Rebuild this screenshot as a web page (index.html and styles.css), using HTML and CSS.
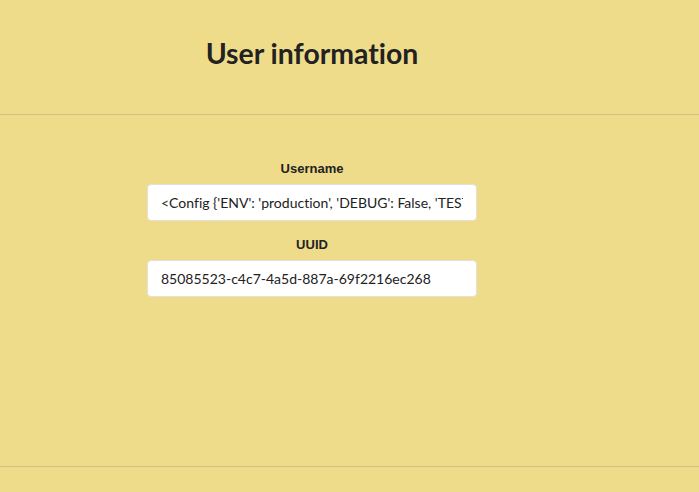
FILE: index.html
```html
<!DOCTYPE html>
<html>
<head>
<meta charset="utf-8">
<link rel="stylesheet" href="styles.css">
</head>
<body>
<header class="top">
  <div class="col"><h1 class="title">User information</h1></div>
</header>
<main class="main">
  <div class="col">
    <form class="form">
      <label class="label">Username</label>
      <input class="field" type="text" value="<Config {'ENV': 'production', 'DEBUG': False, 'TESTING': False}>" readonly>
      <label class="label">UUID</label>
      <input class="field" type="text" value="85085523-c4c7-4a5d-887a-69f2216ec268" readonly>
    </form>
  </div>
</main>
<footer class="bottom"></footer>
</body>
</html>
```

FILE: styles.css
```css
html, body { margin: 0; padding: 0; }
body {
  background: #efdc8a;
  font-family: Lato, "Liberation Sans", sans-serif;
  color: #222;
  width: 699px;
  height: 492px;
  overflow: hidden;
  font-variant-ligatures: none;
}
.col { width: 624px; display: flex; flex-direction: column; align-items: center; }
.top { height: 114px; border-bottom: 1px solid #d3c27f; display: flex; }
.title { margin: 36px 0 0; font-size: 28.4px; font-weight: 700; line-height: 34px; color: #222; font-feature-settings: "liga" 0; }
.main { height: 351px; border-bottom: 1px solid #d3c27f; }
.form { display: flex; flex-direction: column; align-items: center; padding-top: 46px; }
.label {
  font-family: "Liberation Sans", Arial, sans-serif;
  font-weight: 700;
  font-size: 13px;
  line-height: 16px;
  color: #222;
  margin-bottom: 7px;
}
.field {
  box-sizing: border-box;
  width: 330px;
  height: 37px;
  border: 1px solid #e2e0d8;
  border-radius: 4px;
  background: #fff;
  padding: 0 13px;
  font-family: Lato, sans-serif;
  font-size: 14px;
  color: #222;
  margin-bottom: 16px;
  outline: none;
  font-feature-settings: "liga" 0;
}
```
